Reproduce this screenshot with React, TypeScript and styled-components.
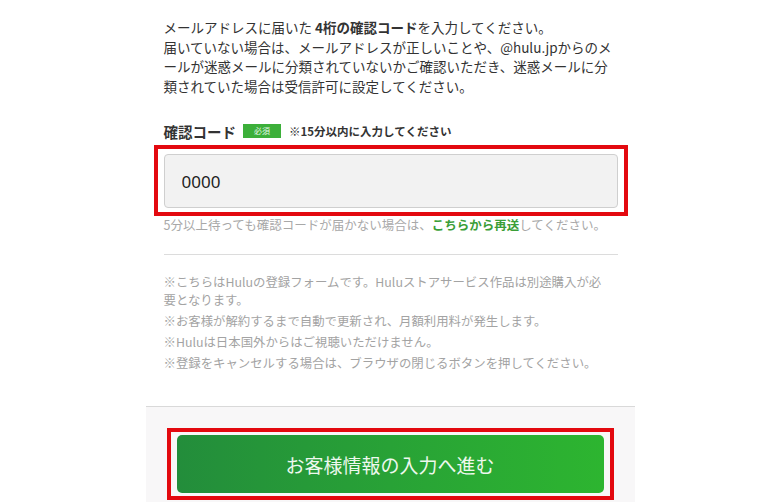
import React, { useState } from 'react';
import styled, { createGlobalStyle } from 'styled-components';

const GlobalStyle = createGlobalStyle`
  html, body {
    margin: 0;
    padding: 0;
    background: #ffffff;
  }
  body {
    font-family: "Noto Sans CJK JP", "Noto Sans", sans-serif;
    color: #333;
  }
`;

const Page = styled.div`
  width: 489px;
  margin: 0 auto;
  background: #fff;
  min-height: 502px;
  display: flex;
  flex-direction: column;
`;

const Body = styled.div`
  padding: 18px 17px 31px 18px;
`;

const Lead = styled.p`
  margin: 0;
  font-size: 13.5px;
  line-height: 19.5px;
  color: #333;
  white-space: nowrap;

  b {
    font-weight: 700;
  }
`;

const LabelRow = styled.div`
  display: flex;
  align-items: center;
  margin-top: 25px;
  height: 20px;
`;

const FieldLabel = styled.span`
  font-size: 14.5px;
  font-weight: 700;
  color: #333;
`;

const Badge = styled.span`
  margin-left: 7px;
  width: 38px;
  height: 14px;
  background: #3caf3a;
  color: #e6f6e6;
  font-size: 8px;
  line-height: 14px;
  text-align: center;
`;

const LimitNote = styled.span`
  margin-left: 8px;
  font-size: 11.5px;
  font-weight: 700;
  color: #333;
`;

// red annotation frame drawn around a control in the screenshot
const Highlight = styled.div<{ $pad: string; $margin: string }>`
  border: 4px solid #e3090f;
  padding: ${(p) => p.$pad};
  margin: ${(p) => p.$margin};
`;

const CodeInput = styled.input`
  display: block;
  box-sizing: border-box;
  width: 100%;
  height: 54px;
  padding: 0 17px;
  background: #f2f2f2;
  border: 1px solid #cfcfcf;
  border-radius: 4px;
  font-family: "Noto Sans", sans-serif;
  font-size: 17px;
  color: #222;
  outline: none;
`;

const Hint = styled.p`
  margin: 0;
  font-size: 12.5px;
  line-height: 18px;
  color: #a8a8a8;
  white-space: nowrap;
`;

const GreenLink = styled.a`
  color: #3a9e37;
  font-weight: 700;
  text-decoration: none;
`;

const Divider = styled.hr`
  margin: 20px 0 18px;
  border: 0;
  border-top: 1px solid #dcdcdc;
`;

const Note = styled.p`
  margin: 0 0 3px;
  font-size: 12.4px;
  line-height: 18px;
  color: #a3a3a3;
  white-space: nowrap;
`;

const Footer = styled.div`
  flex: 1;
  background: #f8f7f8;
  border-top: 1px solid #d9d9d9;
  padding: 21px 21px 3px;
`;

const NextButton = styled.button`
  display: block;
  width: 100%;
  height: 58px;
  border: 0;
  border-radius: 5px;
  background: linear-gradient(90deg, #238d3b 0%, #28a236 50%, #2db530 100%);
  color: #eef8ee;
  font-family: "Noto Sans CJK JP", sans-serif;
  font-size: 19px;
  cursor: pointer;
`;

const notes = [
  ['※こちらはHuluの登録フォームです。Huluストアサービス作品は別途購入が必', '要となります。'],
  ['※お客様が解約するまで自動で更新され、月額利用料が発生します。'],
  ['※Huluは日本国外からはご視聴いただけません。'],
  ['※登録をキャンセルする場合は、ブラウザの閉じるボタンを押してください。'],
];

export default function App() {
  const [code, setCode] = useState('0000');

  return (
    <>
      <GlobalStyle />
      <Page>
        <Body>
          <Lead>
            メールアドレスに届いた <b>4桁の確認コード</b>を入力してください。
            <br />
            届いていない場合は、メールアドレスが正しいことや、@hulu.jpからのメ
            <br />
            ールが迷惑メールに分類されていないかご確認いただき、迷惑メールに分
            <br />
            類されていた場合は受信許可に設定してください。
          </Lead>

          <LabelRow>
            <FieldLabel>確認コード</FieldLabel>
            <Badge>必須</Badge>
            <LimitNote>※15分以内に入力してください</LimitNote>
          </LabelRow>

          <Highlight $pad="5px 6px 4px" $margin="4px -10px 0">
            <CodeInput value={code} onChange={(e) => setCode(e.target.value)} />
          </Highlight>

          <Hint>
            5分以上待っても確認コードが届かない場合は、
            <GreenLink href="#">こちらから再送</GreenLink>
            してください。
          </Hint>

          <Divider />

          {notes.map((lines, i) => (
            <Note key={i}>
              {lines.map((line, j) => (
                <React.Fragment key={j}>
                  {j > 0 && <br />}
                  {line}
                </React.Fragment>
              ))}
            </Note>
          ))}
        </Body>

        <Footer>
          <Highlight $pad="3px 6px" $margin="0">
            <NextButton>お客様情報の入力へ進む</NextButton>
          </Highlight>
        </Footer>
      </Page>
    </>
  );
}
